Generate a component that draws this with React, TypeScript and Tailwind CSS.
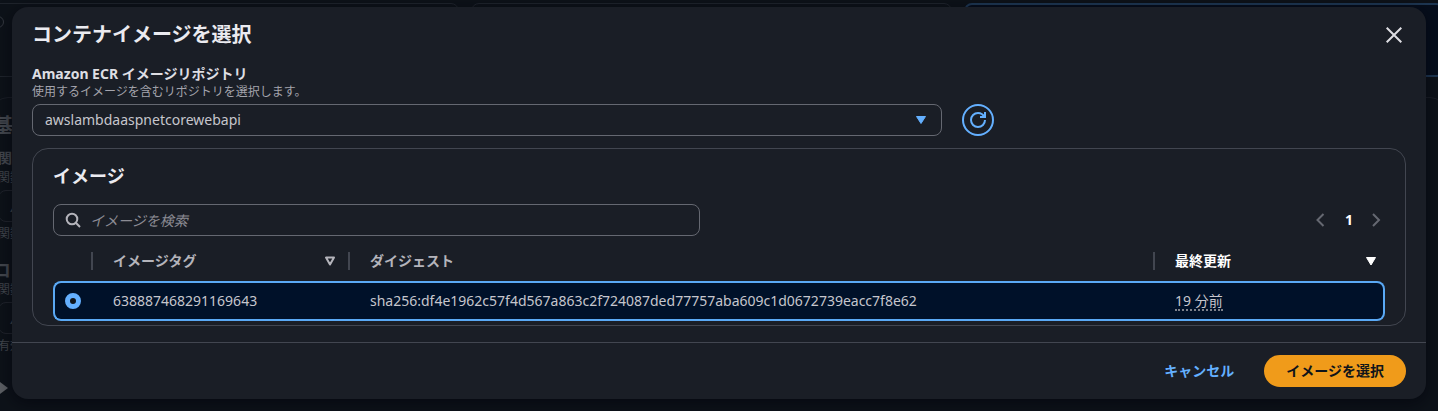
import React from 'react';

const images = [
  {
    tag: '638887468291169643',
    digest: 'sha256:df4e1962c57f4d567a863c2f724087ded77757aba609c1d0672739eacc7f8e62',
    updated: '19 分前',
  },
];

const SortIcon: React.FC<{ filled?: boolean }> = ({ filled }) => (
  <svg className="w-3 h-3 shrink-0" viewBox="0 0 12 12" aria-hidden="true">
    <path
      d={filled ? 'M1.5 2.5h9L6 10z' : 'M2 2.5h8L6 9.5z'}
      fill={filled ? 'currentColor' : 'none'}
      stroke="currentColor"
      strokeWidth={filled ? 1 : 2}
      strokeLinejoin="round"
    />
  </svg>
);

const Backdrop: React.FC = () => (
  <div className="h-screen overflow-hidden bg-[#0d1219] text-[#43474e]" aria-hidden="true">
    <div className="-ml-[21px] -mr-[6px] grid grid-cols-3 gap-3 pt-[3px]">
      <div className="h-[74px] rounded-lg border border-[#1f242c] pt-3 pl-3">
        <div className="w-3 h-3 rounded-full border border-[#33373f]" />
      </div>
      <div className="h-[74px] rounded-lg border border-[#1f242c]" />
      <div className="h-[74px] rounded-lg border-2 border-[#1e3753] bg-[#060e1c]" />
    </div>
    <div className="-mx-2 mt-5 h-[400px] rounded-2xl border border-[#1a1e26] whitespace-nowrap">
      <div className="pt-4 text-xl leading-6 font-bold">基</div>
      <div className="pl-[5px]">
        <div className="mt-3 text-sm leading-4 font-bold">関数</div>
        <div className="mt-1 text-xs leading-4">関数</div>
        <div className="mt-1 h-8 w-96 rounded-lg border border-[#20242c] pl-3 text-sm leading-8 italic">A</div>
        <div className="mt-1 text-xs leading-4">関数</div>
      </div>
      <div className="mt-4 text-lg leading-6 font-bold">コ</div>
      <div className="pl-[5px]">
        <div className="text-xs leading-4">関数</div>
        <div className="mt-1 h-8 w-96 rounded-lg border border-[#20242c] pl-3 text-sm leading-8 italic">A</div>
        <div className="mt-1 text-xs leading-4">有効</div>
        <svg className="ml-[2px] mt-7 w-2 h-3" viewBox="0 0 8 12">
          <path d="M0 0l8 6-8 6z" fill="#5c5f64" />
        </svg>
      </div>
    </div>
  </div>
);

const ImageTable: React.FC = () => (
  <table className="mt-[5px] w-full table-fixed border-separate border-spacing-0 text-left text-sm leading-5">
    <thead>
      <tr className="h-10 text-[#b4b4bb]">
        <th className="w-10 p-0" scope="col">
          <div className="h-[18px] border-r-2 border-[#424650]" />
        </th>
        <th className="w-[257px] p-0" scope="col">
          <div className="flex h-[18px] items-center justify-between border-r-2 border-[#424650] pl-5 pr-3">
            イメージタグ
            <SortIcon />
          </div>
        </th>
        <th className="p-0" scope="col">
          <div className="flex h-[18px] items-center border-r-2 border-[#424650] pl-5">ダイジェスト</div>
        </th>
        <th className="w-[230px] p-0 text-white" scope="col" aria-sort="descending">
          <div className="flex h-[18px] items-center justify-between pl-5 pr-2">
            最終更新
            <SortIcon filled />
          </div>
        </th>
      </tr>
    </thead>
    <tbody>
      {images.map((image) => (
        <tr key={image.tag} className="h-10 text-[#c6c6cd]">
          <td className="rounded-l-lg border-y-2 border-l-2 border-[#5aa9f5] bg-[#001129] p-0 pl-[10px]">
            <input
              type="radio"
              name="image"
              defaultChecked
              aria-label={image.tag}
              className="block w-4 h-4 appearance-none rounded-full border-5 border-[#64b0ff] bg-[#0f141a]"
            />
          </td>
          <td className="border-y-2 border-[#5aa9f5] bg-[#001129] p-0 pl-5">{image.tag}</td>
          <td className="border-y-2 border-[#5aa9f5] bg-[#001129] p-0 pl-5">{image.digest}</td>
          <td className="rounded-r-lg border-y-2 border-r-2 border-[#5aa9f5] bg-[#001129] p-0 pl-5">
            <span className="inline-block border-b-2 border-dotted border-[#7d818b] leading-4">{image.updated}</span>
          </td>
        </tr>
      ))}
    </tbody>
  </table>
);

const App: React.FC = () => {
  return (
    <div className="relative font-['Noto_Sans','Noto_Sans_CJK_JP',sans-serif]" lang="ja">
      <Backdrop />
      <div
        role="dialog"
        aria-labelledby="dialog-title"
        className="absolute inset-x-3 top-[7px] rounded-2xl bg-[#1a1e26] shadow-[0_4px_16px_1px_rgba(0,0,10,0.5)]"
      >
        <div className="px-5 pt-4 pb-4">
          <div className="flex items-center justify-between">
            <h1 id="dialog-title" className="text-xl leading-6 font-bold text-[#ebebf0]">コンテナイメージを選択</h1>
            <button type="button" aria-label="閉じる" className="flex w-6 h-6 items-center justify-center text-[#dedee3]">
              <svg className="w-4 h-4" viewBox="0 0 16 16" fill="none" stroke="currentColor" strokeWidth="2">
                <path d="M.7.7l14.6 14.6M15.3.7L.7 15.3" />
              </svg>
            </button>
          </div>

          <label htmlFor="repository" className="mt-4 block text-sm leading-[21px] font-bold text-[#dedee3]">
            Amazon ECR イメージリポジトリ
          </label>
          <p className="text-xs leading-4 text-[#a4a4ad]">使用するイメージを含むリポジトリを選択します。</p>
          <div className="mt-1 flex w-[70%] gap-5">
            <div className="relative flex-1">
              <select
                id="repository"
                className="h-8 w-full appearance-none rounded-lg border border-[#656871] bg-transparent pl-3 pr-8 text-sm text-[#c6c6cd]"
              >
                <option>awslambdaaspnetcorewebapi</option>
              </select>
              <svg className="pointer-events-none absolute right-[15px] top-[10px] w-3 h-3 text-[#64b0ff]" viewBox="0 0 12 12">
                <path d="M1.500 2.500h9L6 9.500z" fill="currentColor" stroke="currentColor" strokeLinejoin="round" />
              </svg>
            </div>
            <button
              type="button"
              aria-label="更新"
              className="flex w-8 h-8 items-center justify-center rounded-full border-2 border-[#64b0ff] text-[#64b0ff]"
            >
              <svg className="w-4 h-4" viewBox="0 0 16 16" fill="none" stroke="currentColor" strokeWidth="2">
                <path d="M15 8c0 3.87-3.13 7-7 7s-7-3.13-7-7 3.13-7 7-7c2.79 0 5.2 1.63 6.33 4" />
                <path d="M10 5h5V0" />
              </svg>
            </button>
          </div>

          <section className="mt-3 rounded-2xl border border-[#424650] px-5 pt-[15px] pb-1">
            <h2 className="text-lg leading-6 font-bold text-[#ebebf0]">イメージ</h2>
            <div className="mt-4 flex items-center justify-between">
              <div className="relative w-[647px] max-w-full">
                <svg
                  className="pointer-events-none absolute left-3 top-2 w-4 h-4 text-[#b4b4bb]"
                  viewBox="0 0 16 16"
                  fill="none"
                  stroke="currentColor"
                  strokeWidth="2"
                >
                  <circle cx="7" cy="7" r="5.3" />
                  <path d="M10.8 10.8L15 15" />
                </svg>
                <input
                  type="search"
                  aria-label="イメージを検索"
                  placeholder="イメージを検索"
                  className="h-8 w-full rounded-lg border border-[#656871] bg-transparent pl-9 pr-3 text-sm text-[#c6c6cd] placeholder:italic placeholder:text-[#8c8c94]"
                />
              </div>
              <nav className="flex items-center gap-3 text-sm font-bold text-white" aria-label="ページ">
                <button type="button" aria-label="前のページ" className="text-[#656871]">
                  <svg className="w-4 h-4" viewBox="0 0 16 16" fill="none" stroke="currentColor" strokeWidth="2">
                    <path d="M10.500 2l-6 6 6 6" />
                  </svg>
                </button>
                <button type="button" className="w-4 text-center">1</button>
                <button type="button" aria-label="次のページ" className="text-[#656871]">
                  <svg className="w-4 h-4" viewBox="0 0 16 16" fill="none" stroke="currentColor" strokeWidth="2">
                    <path d="M4 2l6 6-6 6" />
                  </svg>
                </button>
              </nav>
            </div>
            <ImageTable />
          </section>
        </div>

        <div className="flex justify-end gap-[10px] border-t border-[#424650] px-5 py-3 text-sm font-bold">
          <button type="button" className="h-8 px-5 text-[#64b0ff]">キャンセル</button>
          <button type="button" className="h-8 rounded-full bg-[#f09b1a] px-[22px] text-[#0f141a]">イメージを選択</button>
        </div>
      </div>
    </div>
  );
};

export default App;
